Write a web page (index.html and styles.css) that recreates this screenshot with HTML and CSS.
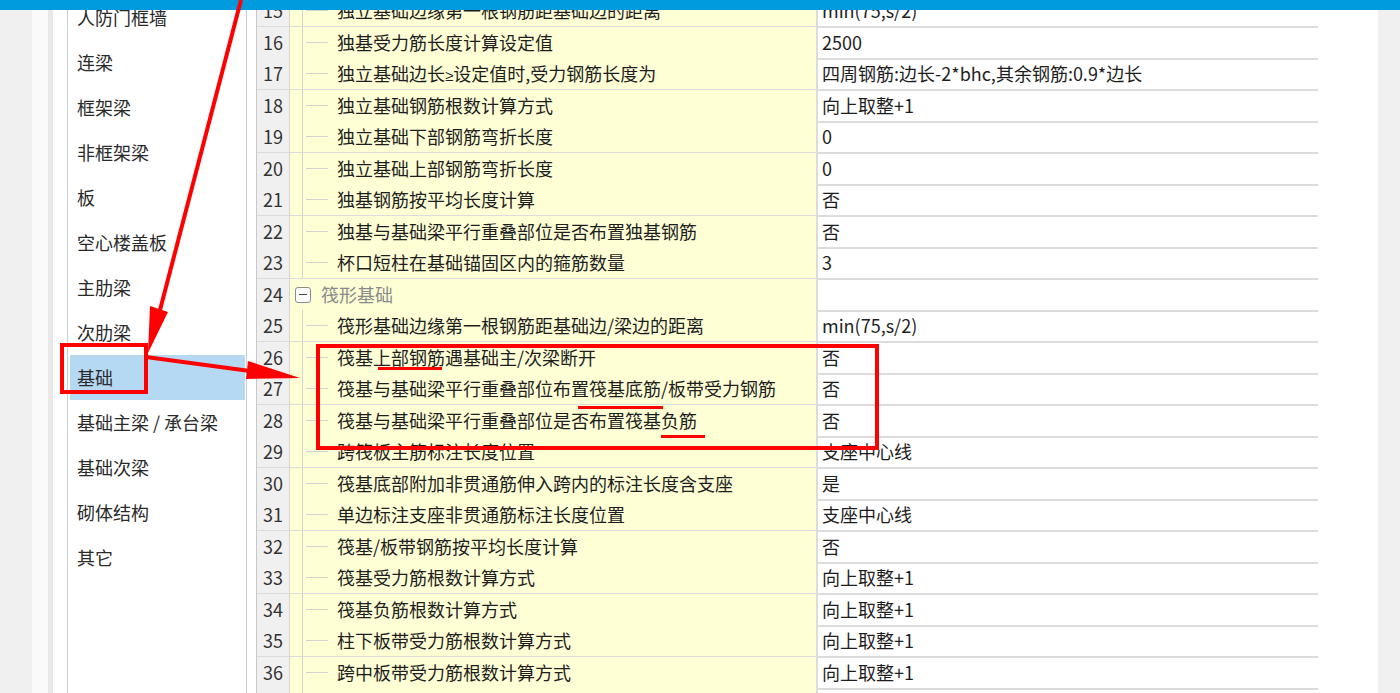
FILE: index.html
```html
<!DOCTYPE html>
<html lang="zh-CN">
<head>
    <meta charset="UTF-8">
    <title>计算设置 - 基础</title>
    <link rel="stylesheet" href="styles.css">
</head>
<body>
    <div class="titlebar"></div>
    <div class="window">
        <div class="gutter"></div>
        <div class="edge"></div>
        <div class="divider"></div>
        <div class="spacer"></div>

        <ul class="nav">
            <li>人防门框墙</li>
            <li>连梁</li>
            <li>框架梁</li>
            <li>非框架梁</li>
            <li>板</li>
            <li>空心楼盖板</li>
            <li>主肋梁</li>
            <li>次肋梁</li>
            <li class="active">基础</li>
            <li>基础主梁 / 承台梁</li>
            <li>基础次梁</li>
            <li>砌体结构</li>
            <li>其它</li>
        </ul>

        <div class="gap"></div>

        <div class="grid">
            <div class="row"><div class="num">15</div><div class="name"><span class="indent"></span><span class="branch"></span><span class="label">独立基础边缘第一根钢筋距基础边的距离</span></div><div class="value">min(75,s/2)</div></div>
            <div class="row"><div class="num">16</div><div class="name"><span class="indent"></span><span class="branch"></span><span class="label">独基受力筋长度计算设定值</span></div><div class="value">2500</div></div>
            <div class="row"><div class="num">17</div><div class="name"><span class="indent"></span><span class="branch"></span><span class="label">独立基础边长<span class="sym">≥</span>设定值时,受力钢筋长度为</span></div><div class="value">四周钢筋:边长-2*bhc,其余钢筋:0.9*边长</div></div>
            <div class="row"><div class="num">18</div><div class="name"><span class="indent"></span><span class="branch"></span><span class="label">独立基础钢筋根数计算方式</span></div><div class="value">向上取整+1</div></div>
            <div class="row"><div class="num">19</div><div class="name"><span class="indent"></span><span class="branch"></span><span class="label">独立基础下部钢筋弯折长度</span></div><div class="value">0</div></div>
            <div class="row"><div class="num">20</div><div class="name"><span class="indent"></span><span class="branch"></span><span class="label">独立基础上部钢筋弯折长度</span></div><div class="value">0</div></div>
            <div class="row"><div class="num">21</div><div class="name"><span class="indent"></span><span class="branch"></span><span class="label">独基钢筋按平均长度计算</span></div><div class="value">否</div></div>
            <div class="row"><div class="num">22</div><div class="name"><span class="indent"></span><span class="branch"></span><span class="label">独基与基础梁平行重叠部位是否布置独基钢筋</span></div><div class="value">否</div></div>
            <div class="row"><div class="num">23</div><div class="name"><span class="indent"></span><span class="branch"></span><span class="label">杯口短柱在基础锚固区内的箍筋数量</span></div><div class="value">3</div></div>
            <div class="row"><div class="num">24</div><div class="name group"><span class="toggle"><span class="minus"></span></span><span class="label">筏形基础</span></div><div class="value"></div></div>
            <div class="row"><div class="num">25</div><div class="name"><span class="indent"></span><span class="branch"></span><span class="label">筏形基础边缘第一根钢筋距基础边/梁边的距离</span></div><div class="value">min(75,s/2)</div></div>
            <div class="row"><div class="num">26</div><div class="name"><span class="indent"></span><span class="branch"></span><span class="label">筏基上部钢筋遇基础主/次梁断开</span></div><div class="value">否</div></div>
            <div class="row"><div class="num">27</div><div class="name"><span class="indent"></span><span class="branch"></span><span class="label">筏基与基础梁平行重叠部位布置筏基底筋/板带受力钢筋</span></div><div class="value">否</div></div>
            <div class="row"><div class="num">28</div><div class="name"><span class="indent"></span><span class="branch"></span><span class="label">筏基与基础梁平行重叠部位是否布置筏基负筋</span></div><div class="value">否</div></div>
            <div class="row"><div class="num">29</div><div class="name"><span class="indent"></span><span class="branch"></span><span class="label">跨筏板主筋标注长度位置</span></div><div class="value">支座中心线</div></div>
            <div class="row"><div class="num">30</div><div class="name"><span class="indent"></span><span class="branch"></span><span class="label">筏基底部附加非贯通筋伸入跨内的标注长度含支座</span></div><div class="value">是</div></div>
            <div class="row"><div class="num">31</div><div class="name"><span class="indent"></span><span class="branch"></span><span class="label">单边标注支座非贯通筋标注长度位置</span></div><div class="value">支座中心线</div></div>
            <div class="row"><div class="num">32</div><div class="name"><span class="indent"></span><span class="branch"></span><span class="label">筏基/板带钢筋按平均长度计算</span></div><div class="value">否</div></div>
            <div class="row"><div class="num">33</div><div class="name"><span class="indent"></span><span class="branch"></span><span class="label">筏基受力筋根数计算方式</span></div><div class="value">向上取整+1</div></div>
            <div class="row"><div class="num">34</div><div class="name"><span class="indent"></span><span class="branch"></span><span class="label">筏基负筋根数计算方式</span></div><div class="value">向上取整+1</div></div>
            <div class="row"><div class="num">35</div><div class="name"><span class="indent"></span><span class="branch"></span><span class="label">柱下板带受力筋根数计算方式</span></div><div class="value">向上取整+1</div></div>
            <div class="row"><div class="num">36</div><div class="name"><span class="indent"></span><span class="branch"></span><span class="label">跨中板带受力筋根数计算方式</span></div><div class="value">向上取整+1</div></div>
            <div class="row"><div class="num">37</div><div class="name"><span class="indent"></span><span class="branch"></span><span class="label"></span></div><div class="value"></div></div>
        </div>

        <div class="tail"></div>
        <div class="gutter narrow"></div>
    </div>

    <!-- hand-drawn annotation marks on top of the screenshot -->
    <svg class="marks" width="1400" height="693" viewBox="0 0 1400 693">
        <g fill="none" stroke="#ff0000" stroke-width="4">
            <rect x="62" y="345" width="84" height="47"/>
            <rect x="318" y="346" width="559" height="102"/>
            <line x1="241" y1="0" x2="160" y2="310"/>
            <line x1="146" y1="357" x2="250" y2="371"/>
        </g>
        <g fill="#ff0000">
            <polygon points="150,306 168,312 148,353"/>
            <polygon points="248,361 246,379 300,378"/>
            <rect x="378" y="367" width="64" height="3"/>
            <rect x="578" y="406" width="85" height="3"/>
            <rect x="661" y="435" width="44" height="3"/>
        </g>
    </svg>
</body>
</html>
```

FILE: styles.css
```css
body {
    margin: 0;
    width: 1400px;
    height: 693px;
    overflow: hidden;
    position: relative;
    background-color: #f0f0f0;
    font-family: "Microsoft YaHei", "Noto Sans CJK SC", "Noto Sans", sans-serif;
    font-size: 18px;
    color: #1e1e1e;
}
.titlebar {
    height: 10px;
    background-color: #009ade;
    position: relative;
    z-index: 2;
}
.window {
    display: flex;
    height: 683px;
    overflow: hidden;
}
.gutter {
    width: 32px;
    flex-shrink: 0;
    background-color: #f0f0f0;
}
.gutter.narrow {
    width: 22px;
}
.edge {
    width: 16px;
    background-color: #fafafa;
}
.divider {
    width: 5px;
    background-color: #e8e8e8;
}
.spacer {
    width: 14px;
    background-color: #fff;
}
.nav {
    list-style: none;
    margin: 0;
    padding: 0 1px 0 2px;
    width: 175px;
    border-left: 1px solid #c6cdd5;
    border-right: 1px solid #c6cdd5;
    background-color: #fff;
}
.nav li {
    height: 45px;
    line-height: 45px;
    padding-left: 7px;
    color: #2a2a2a;
    white-space: nowrap;
}
.nav li:first-child {
    margin-top: -15px;
}
.nav li.active {
    background-color: #b5d8f3;
}
.gap {
    width: 9px;
    background-color: #fff;
}
.grid {
    width: 1061px;
    border-left: 1px solid #c8c8c8;
    background-color: #fff;
}
.row {
    display: grid;
    grid-template-columns: 33px 526px 502px;
    height: 31.5px;
}
.row:first-child {
    margin-top: -15px;
}
.num {
    background-color: #f0f0f0;
    border-right: 1px solid #d4d4d4;
    border-bottom: 2px solid #dadada;
    text-align: center;
    line-height: 31px;
    color: #333;
}
.name {
    display: flex;
    background-color: #ffffd6;
    border-bottom: 2px solid #dcdcdc;
    line-height: 31px;
    white-space: nowrap;
    overflow: hidden;
}
.indent {
    width: 12px;
    flex-shrink: 0;
}
.branch {
    width: 26px;
    flex-shrink: 0;
    border-left: 1px solid #d2d2d2;
    background: linear-gradient(#d2d2d2, #d2d2d2) no-repeat 3px 50% / 22px 1px;
}
.label {
    padding-left: 8px;
}
.sym {
    font-family: "Noto Sans", sans-serif;
    font-size: 15px;
}
.group .label {
    padding-left: 10px;
    color: #8a8a8a;
}
.toggle {
    width: 16px;
    height: 16px;
    margin: 8px 0 0 5px;
    box-sizing: border-box;
    border: 1px solid #8c8c8c;
    border-radius: 3px;
    background-color: #fff;
    display: flex;
    align-items: center;
    justify-content: center;
    flex-shrink: 0;
}
.minus {
    width: 8px;
    height: 1px;
    background-color: #444;
}
.value {
    border-left: 2px solid #dcdcdc;
    border-bottom: 2px solid #dcdcdc;
    padding-left: 4px;
    line-height: 31px;
    white-space: nowrap;
}
.tail {
    width: 60px;
    background-color: #fff;
}
.marks {
    position: absolute;
    left: 0;
    top: 0;
    z-index: 3;
    pointer-events: none;
}
```
